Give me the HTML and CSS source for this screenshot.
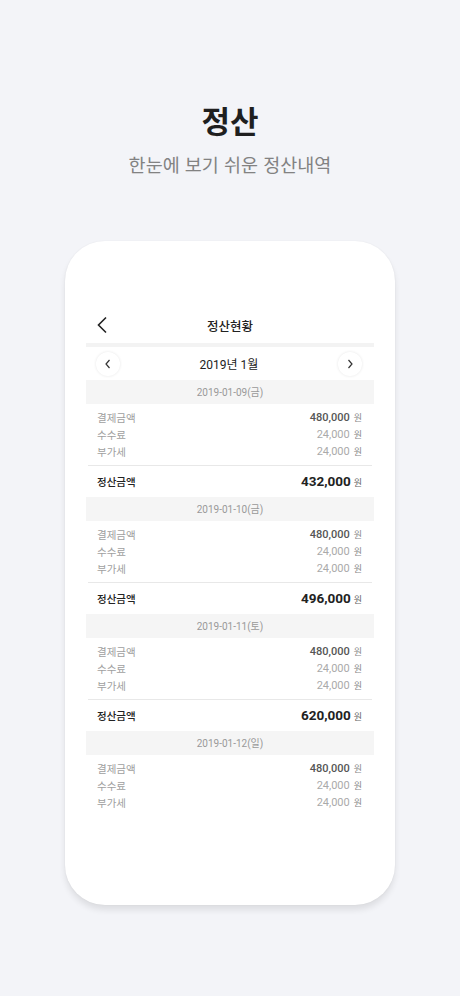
FILE: index.html
```html
<!DOCTYPE html>
<html lang="ko">
<head>
<meta charset="utf-8">
<link rel="stylesheet" href="styles.css">
</head>
<body>
<header class="intro">
  <h1 class="intro-title">정산</h1>
  <p class="intro-sub">한눈에 보기 쉬운 정산내역</p>
</header>
<div class="phone">
  <div class="appbar">
    <svg class="back" width="12" height="18" viewBox="0 0 12 18"><path d="M10 1.5 L2.5 9 L10 16.5" fill="none" stroke="#222" stroke-width="1.6"/></svg>
    <span class="appbar-title">정산현황</span>
  </div>
  <div class="sep"></div>
  <div class="month">
    <span class="navbtn"><svg width="8" height="10" viewBox="0 0 8 10"><path d="M5.5 1 L2 5 L5.5 9" fill="none" stroke="#333" stroke-width="1.2"/></svg></span>
    <span class="month-label">2019년 1월</span>
    <span class="navbtn"><svg width="8" height="10" viewBox="0 0 8 10"><path d="M2.5 1 L6 5 L2.5 9" fill="none" stroke="#333" stroke-width="1.2"/></svg></span>
  </div>

  <section class="day">
    <div class="day-head">2019-01-09(금)</div>
    <div class="rows">
      <div class="row"><span>결제금액</span><span class="val strong">480,000<em>원</em></span></div>
      <div class="row"><span>수수료</span><span class="val">24,000<em>원</em></span></div>
      <div class="row"><span>부가세</span><span class="val">24,000<em>원</em></span></div>
    </div>
    <div class="total"><span>정산금액</span><span class="total-val">432,000<em>원</em></span></div>
  </section>

  <section class="day">
    <div class="day-head">2019-01-10(금)</div>
    <div class="rows">
      <div class="row"><span>결제금액</span><span class="val strong">480,000<em>원</em></span></div>
      <div class="row"><span>수수료</span><span class="val">24,000<em>원</em></span></div>
      <div class="row"><span>부가세</span><span class="val">24,000<em>원</em></span></div>
    </div>
    <div class="total"><span>정산금액</span><span class="total-val">496,000<em>원</em></span></div>
  </section>

  <section class="day">
    <div class="day-head">2019-01-11(토)</div>
    <div class="rows">
      <div class="row"><span>결제금액</span><span class="val strong">480,000<em>원</em></span></div>
      <div class="row"><span>수수료</span><span class="val">24,000<em>원</em></span></div>
      <div class="row"><span>부가세</span><span class="val">24,000<em>원</em></span></div>
    </div>
    <div class="total"><span>정산금액</span><span class="total-val">620,000<em>원</em></span></div>
  </section>

  <section class="day">
    <div class="day-head">2019-01-12(일)</div>
    <div class="rows last">
      <div class="row"><span>결제금액</span><span class="val strong">480,000<em>원</em></span></div>
      <div class="row"><span>수수료</span><span class="val">24,000<em>원</em></span></div>
      <div class="row"><span>부가세</span><span class="val">24,000<em>원</em></span></div>
    </div>
  </section>
</div>
</body>
</html>
```

FILE: styles.css
```css
* { box-sizing: border-box; }
html, body { margin: 0; padding: 0; }
body {
  width: 460px;
  height: 996px;
  background: #f3f4f8;
  font-family: "Roboto", "Noto Sans CJK KR", sans-serif;
  color: #222;
  overflow: hidden;
}
.intro {
  padding-top: 99px;
  text-align: center;
}
.intro-title {
  margin: 0;
  font-family: "Noto Sans CJK KR", sans-serif;
  font-size: 31px;
  line-height: 42px;
  font-weight: 700;
  color: #1f1f1f;
}
.intro-sub {
  margin: 10px 0 0;
  font-family: "Noto Sans CJK KR", sans-serif;
  font-size: 18.5px;
  line-height: 26px;
  font-weight: 400;
  color: #828282;
}
.phone {
  margin: 64px auto 0;
  width: 330px;
  height: 664px;
  background: #fff;
  border-radius: 40px;
  box-shadow: 0 5px 6px rgba(0,0,0,0.09), 0 0 2px rgba(0,0,0,0.06);
  padding: 66px 21px 0;
}
.appbar {
  height: 36px;
  display: flex;
  align-items: center;
  justify-content: center;
  position: relative;
}
.back {
  position: absolute;
  left: 10px;
  top: 9px;
}
.appbar-title {
  font-family: "Noto Sans CJK KR", sans-serif;
  font-size: 12.5px;
  font-weight: 500;
  color: #222;
}
.sep {
  height: 4px;
  background: #f3f3f3;
}
.month {
  height: 33px;
  display: flex;
  align-items: center;
  justify-content: space-between;
  padding: 0 12px 0 10px;
}
.navbtn {
  width: 24px;
  height: 24px;
  border-radius: 50%;
  background: #fff;
  box-shadow: 0 0 3px rgba(0,0,0,0.1);
  display: flex;
  align-items: center;
  justify-content: center;
}
.month-label {
  font-size: 12px;
  font-weight: 400;
  color: #222;
}
.day-head {
  height: 24px;
  background: #f5f5f5;
  text-align: center;
  font-size: 10px;
  line-height: 22px;
  padding-top: 2px;
  color: #999;
}
.rows {
  padding: 5px 10px 5px 9px;
  border-bottom: 1px solid #e8e8e8;
  margin: 0 2px;
}
.rows.last { border-bottom: none; }
.row {
  height: 17px;
  display: flex;
  justify-content: space-between;
  align-items: center;
  font-size: 10.5px;
  color: #a0a0a0;
}
.row span:first-child { font-family: "Noto Sans CJK KR", sans-serif; }
.val { font-size: 11px; color: #aaa; }
.val.strong { color: #555; font-weight: 500; }
.val em, .total-val em {
  font-style: normal;
  font-family: "Noto Sans CJK KR", sans-serif;
  font-size: 9px;
  font-weight: 400;
  margin-left: 4px;
  color: #888;
}
.total {
  height: 31px;
  display: flex;
  justify-content: space-between;
  align-items: center;
  padding: 0 12px 1px 11px;
}
.total span:first-child {
  font-family: "Noto Sans CJK KR", sans-serif;
  font-size: 10.5px;
  font-weight: 500;
  color: #222;
}
.total-val {
  font-size: 13.5px;
  font-weight: 700;
  color: #222;
}
.total-val em { margin-left: 3px; color: #666; }
```
